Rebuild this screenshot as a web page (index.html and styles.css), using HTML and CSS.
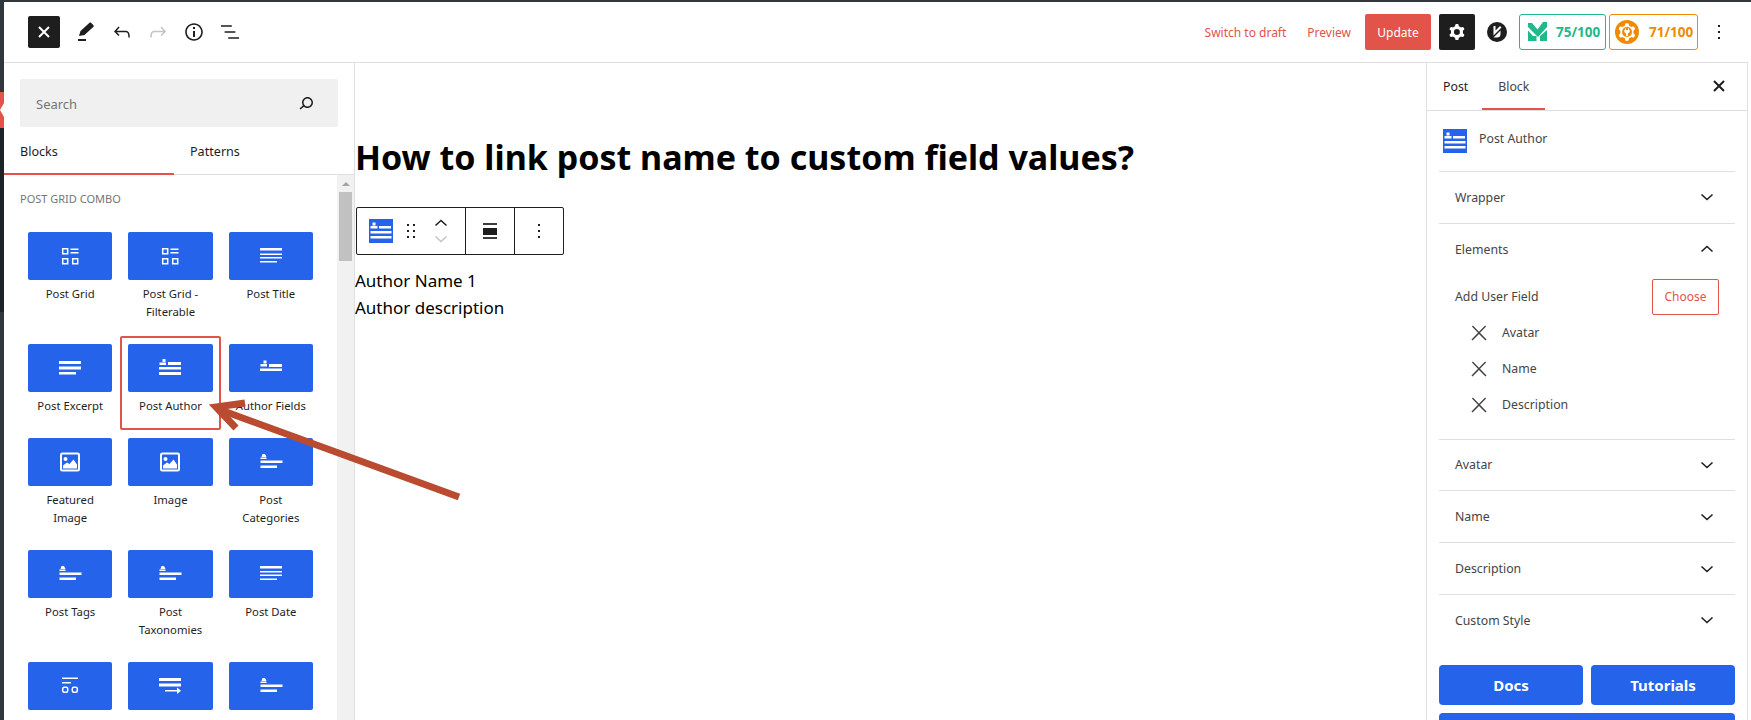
FILE: index.html
```html
<!DOCTYPE html>
<html>
<head>
  <title>Edit Post</title>
  <link rel="stylesheet" href="styles.css">
</head>
<body>
  <svg class="icon-defs">
    <symbol id="i-grid" viewBox="0 0 24 24">
      <path fill="none" stroke="currentColor" stroke-width="1.5" d="M4.7 4.7h5v5h-5zM4.7 14.7h5v5h-5zM14.700 14.700h5v5h-5z"/>
      <path fill="currentColor" d="M12.500 4.500h8V6h-8zM12.500 8h8v1.500h-8z"/>
    </symbol>
    <symbol id="i-title" viewBox="0 0 24 24">
      <path fill="currentColor" d="M1 4h22v2.500H1zM1 9.500h22V11H1zM1 13h22v1.500H1zM1 17h17v1.500H1z"/>
    </symbol>
    <symbol id="i-excerpt" viewBox="0 0 24 24">
      <path fill="currentColor" d="M1 5h22v3H1zM1 10.500h22v3H1zM1 16h17v2.500H1z"/>
    </symbol>
    <symbol id="i-author" viewBox="0 0 24 24">
      <path fill="currentColor" d="M4.500 3h3v3h-3zM1.500 6.500h6.500v2.500H1.500zM10 6h13v3H10zM1 11h22v2.500H1zM1 16h22v3H1z"/>
    </symbol>
    <symbol id="i-fields" viewBox="0 0 24 24">
      <path fill="currentColor" d="M4.500 4.500h3v3h-3zM1.500 8h6.500v2.500H1.500zM10 8h13v3H10zM1 12.500h22v2.500H1z"/>
    </symbol>
    <symbol id="i-image" viewBox="0 0 24 24">
      <rect x="3" y="3.500" width="18" height="17" rx="1.500" fill="none" stroke="currentColor" stroke-width="2"/>
      <circle cx="7.500" cy="9" r="2" fill="currentColor"/>
      <path fill="currentColor" d="M5 18.500v-3l4-3 2.500 1.500 4-4.500 3.500 5v4z"/>
    </symbol>
    <symbol id="i-tags" viewBox="0 0 24 24">
      <path fill="currentColor" d="M3.500 4h2.500l1.500 3H2.500zM1.500 7.500h6V9h-6zM1.500 10.500h22V13h-22zM1.500 15.500h16.500V18H1.500z"/>
    </symbol>
    <symbol id="i-date" viewBox="0 0 24 24">
      <path fill="currentColor" d="M1 4h22v2.500H1zM1 9h22v1.500H1zM1 12.500h22V14H1zM1 16.500h17V18H1z"/>
    </symbol>
    <symbol id="i-meta" viewBox="0 0 24 24">
      <path fill="currentColor" d="M4 3.500h16V5H4zM4 8h9v1.500H4z"/>
      <rect x="4.700" y="13.200" width="5" height="5" rx="1.500" fill="none" stroke="currentColor" stroke-width="1.500"/>
      <rect x="14.300" y="13.200" width="5" height="5" rx="1.500" fill="none" stroke="currentColor" stroke-width="1.500"/>
    </symbol>
    <symbol id="i-more" viewBox="0 0 24 24">
      <path fill="currentColor" d="M1 4h22v3H1zM1 9.500h22v3H1zM7 16h12v-2.500l4 3.200-4 3.300v-2.500H7z"/>
    </symbol>
    <symbol id="i-author-blue" viewBox="0 0 24 24">
      <rect width="24" height="24" fill="#2563eb"/>
      <path fill="#fff" d="M3.500 3.500h3v3h-3zM1.500 7h7v2.500h-7zM10 7h12v2.500H10zM1.500 12h21v2.500h-21zM1.500 17h21v2.500h-21z"/>
    </symbol>
    <symbol id="i-chev-down" viewBox="0 0 24 24">
      <path fill="none" stroke="currentColor" stroke-width="1.600" d="M6.500 9.500l5.500 5 5.500-5"/>
    </symbol>
    <symbol id="i-chev-up" viewBox="0 0 24 24">
      <path fill="none" stroke="currentColor" stroke-width="1.600" d="M6.500 14.500l5.500-5 5.500 5"/>
    </symbol>
    <symbol id="i-close" viewBox="0 0 24 24">
      <path fill="currentColor" d="M13 11.800l6.100-6.300-1-1-6.100 6.200-6.100-6.200-1 1 6.100 6.300-6.500 6.700 1 1 6.500-6.600 6.500 6.600 1-1z"/>
    </symbol>
    <symbol id="i-close-bold" viewBox="0 0 24 24">
      <path fill="none" stroke="currentColor" stroke-width="2" d="M7 7l10 10M17 7L7 17"/>
    </symbol>
    <symbol id="i-dots" viewBox="0 0 24 24">
      <path fill="currentColor" d="M13 19h-2v-2h2v2zm0-6h-2v-2h2v2zm0-6h-2V5h2v2z"/>
    </symbol>
  </svg>

  <div class="shell">
    <div class="admin-strip">
      <div class="strip-top"></div>
      <div class="strip-active"></div>
      <div class="strip-mid"></div>
      <div class="strip-bottom"></div>
    </div>

    <div class="editor">
      <header class="topbar">
        <button class="close-btn"><svg width="24" height="24"><use href="#i-close-bold"/></svg></button>
        <svg class="tool" width="24" height="24" viewBox="0 0 24 24"><path fill="#1e1e1e" d="M4 19h8v2H4zM5 16l1.500-5 9-8.200c.5-.4 1.100-.4 1.500 0l2.500 2.500c.4.400.4 1 0 1.500L10.500 15z"/></svg>
        <svg class="tool" width="24" height="24" viewBox="0 0 24 24"><path fill="#1e1e1e" d="M18.300 11.700c-.6-.6-1.400-.9-2.300-.9H6.700l2.900-3.300-1.100-1-4.500 5L8.500 16l1-1-2.700-2.700H16c.5 0 .9.200 1.300.5 1 1 1 3.400 1 4.500v.3h1.500v-.2c0-1.500 0-4.300-1.500-5.700z"/></svg>
        <svg class="tool" width="24" height="24" viewBox="0 0 24 24"><path fill="#c4c4c4" d="M15.600 6.500l-1.100 1 2.900 3.300H8c-.9 0-1.700.3-2.300.9-1.400 1.500-1.400 4.200-1.400 5.600v.2h1.500v-.3c0-1.100 0-3.500 1-4.500.3-.3.7-.5 1.300-.5h9.200L14.500 15l1.100 1.100 4.600-4.600-4.600-5z"/></svg>
        <svg class="tool" width="24" height="24" viewBox="0 0 24 24"><path fill="#1e1e1e" d="M12 3.200c-4.800 0-8.800 3.900-8.800 8.800 0 4.800 3.900 8.800 8.800 8.800 4.800 0 8.800-3.900 8.800-8.800 0-4.800-4-8.800-8.800-8.800zm0 16c-4 0-7.200-3.300-7.200-7.200C4.800 8 8 4.800 12 4.800s7.200 3.300 7.200 7.200c0 4-3.200 7.200-7.200 7.200zM11 17h2v-6h-2v6zm0-8h2V7h-2v2z"/></svg>
        <svg class="tool" width="24" height="24" viewBox="0 0 24 24"><path fill="#1e1e1e" d="M13.800 5.200H3v1.500h10.800V5.200zm-3.600 12v1.500H21v-1.500H10.200zm7.200-6H6.600v1.500h10.800v-1.500z"/></svg>

        <div class="topbar-right">
          <a class="link-btn draft-link">Switch to draft</a>
          <a class="link-btn preview-link">Preview</a>
          <button class="update-btn">Update</button>
          <button class="settings-btn">
            <svg width="24" height="24" viewBox="0 0 24 24"><path fill="#fff" fill-rule="evenodd" d="M10.289 4.836A1 1 0 0111.275 4h1.306a1 1 0 01.987.836l.244 1.466c.787.26 1.503.679 2.108 1.218l1.393-.522a1 1 0 011.216.437l.653 1.13a1 1 0 01-.23 1.273l-1.148.944a6.025 6.025 0 010 2.435l1.149.946a1 1 0 01.23 1.272l-.653 1.13a1 1 0 01-1.216.437l-1.394-.522c-.605.54-1.32.958-2.108 1.218l-.244 1.466a1 1 0 01-.987.836h-1.306a1 1 0 01-.986-.836l-.244-1.466a5.995 5.995 0 01-2.108-1.218l-1.394.522a1 1 0 01-1.217-.436l-.653-1.131a1 1 0 01.23-1.272l1.149-.946a6.026 6.026 0 010-2.435l-1.148-.944a1 1 0 01-.23-1.272l.653-1.131a1 1 0 011.217-.437l1.393.522a5.994 5.994 0 012.108-1.218l.244-1.466zM14.929 12a3 3 0 11-6 0 3 3 0 016 0z"/></svg>
          </button>
          <svg class="brand-logo" width="20" height="20" viewBox="0 0 20 20">
            <circle cx="10" cy="10" r="10" fill="#1e1e1e"/>
            <path fill="#fff" d="M6.500 4h2v4.500l4.500-4.500 1.500 1.500-8 8z"/>
            <path fill="#fff" d="M6.500 15.500l7-7v3.500a3.500 3.500 0 0 1-3.500 3.500z"/>
          </svg>
          <div class="score score-green">
            <svg width="19" height="19" viewBox="0 0 19 19"><path fill="#1fb98c" d="M0 1h4l5.500 6.500L15 0h4v5l-9 10L0 5zM0 8.500l5 5.500h3.500v5H0zM19 8v11h-7v-5z"/></svg>
            <span>75/100</span>
          </div>
          <div class="score score-orange">
            <svg width="24" height="24" viewBox="0 0 24 24">
              <circle cx="12" cy="12" r="12" fill="#f08a00"/>
              <path transform="translate(-1.200 -1.200) scale(1.100)" fill="#fff" d="M10.289 4.836A1 1 0 0111.275 4h1.306a1 1 0 01.987.836l.244 1.466c.787.26 1.503.679 2.108 1.218l1.393-.522a1 1 0 011.216.437l.653 1.13a1 1 0 01-.23 1.273l-1.148.944a6.025 6.025 0 010 2.435l1.149.946a1 1 0 01.23 1.272l-.653 1.13a1 1 0 01-1.216.437l-1.394-.522c-.605.54-1.32.958-2.108 1.218l-.244 1.466a1 1 0 01-.987.836h-1.306a1 1 0 01-.986-.836l-.244-1.466a5.995 5.995 0 01-2.108-1.218l-1.394.522a1 1 0 01-1.217-.436l-.653-1.131a1 1 0 01.23-1.272l1.149-.946a6.026 6.026 0 010-2.435l-1.148-.944a1 1 0 01-.23-1.272l.653-1.131a1 1 0 011.217-.437l1.393.522a5.994 5.994 0 012.108-1.218l.244-1.466z"/>
              <circle cx="12" cy="12" r="5" fill="#f08a00"/>
              <path fill="#fff" d="M10 8.500h1v1.500h2V8.500h1V10h.7v2l-1.700 1.500V16h-2v-2.500L9.300 12v-2h.7z"/>
            </svg>
            <span>71/100</span>
          </div>
          <svg class="more-top" width="24" height="24"><use href="#i-dots"/></svg>
        </div>
      </header>

      <div class="workspace">
        <aside class="inserter">
          <div class="search-box">
            <span>Search</span>
            <svg width="24" height="24" viewBox="0 0 24 24"><path fill="#1e1e1e" d="M13.500 6C10.500 6 8 8.500 8 11.500c0 1.100.3 2.100.9 3l-3.400 3 1 1.100 3.400-2.900c1 .9 2.200 1.400 3.600 1.400 3 0 5.500-2.500 5.500-5.500C19 8.500 16.500 6 13.500 6zm0 9.500c-2.200 0-4-1.800-4-4s1.800-4 4-4 4 1.800 4 4-1.800 4-4 4z"/></svg>
          </div>
          <div class="inserter-tabs">
            <div class="inserter-tab active">Blocks</div>
            <div class="inserter-tab">Patterns</div>
          </div>
          <div class="inserter-body">
            <div class="block-list">
              <h2 class="block-heading">POST GRID COMBO</h2>
              <div class="block-grid">
                <div class="block-item"><div class="tile"><svg><use href="#i-grid"/></svg></div><p>Post Grid</p></div>
                <div class="block-item"><div class="tile"><svg><use href="#i-grid"/></svg></div><p>Post Grid - Filterable</p></div>
                <div class="block-item"><div class="tile"><svg><use href="#i-title"/></svg></div><p>Post Title</p></div>
                <div class="block-item"><div class="tile"><svg><use href="#i-excerpt"/></svg></div><p>Post Excerpt</p></div>
                <div class="block-item marked"><div class="tile"><svg><use href="#i-author"/></svg></div><p>Post Author</p></div>
                <div class="block-item"><div class="tile"><svg><use href="#i-fields"/></svg></div><p>Author Fields</p></div>
                <div class="block-item"><div class="tile"><svg><use href="#i-image"/></svg></div><p>Featured Image</p></div>
                <div class="block-item"><div class="tile"><svg><use href="#i-image"/></svg></div><p>Image</p></div>
                <div class="block-item"><div class="tile"><svg><use href="#i-tags"/></svg></div><p>Post Categories</p></div>
                <div class="block-item"><div class="tile"><svg><use href="#i-tags"/></svg></div><p>Post Tags</p></div>
                <div class="block-item"><div class="tile"><svg><use href="#i-tags"/></svg></div><p>Post Taxonomies</p></div>
                <div class="block-item"><div class="tile"><svg><use href="#i-date"/></svg></div><p>Post Date</p></div>
                <div class="block-item"><div class="tile"><svg><use href="#i-meta"/></svg></div><p>Post Meta</p></div>
                <div class="block-item"><div class="tile"><svg><use href="#i-more"/></svg></div><p>Read More</p></div>
                <div class="block-item"><div class="tile"><svg><use href="#i-tags"/></svg></div><p>Terms List</p></div>
              </div>
            </div>
            <div class="scrollbar">
              <div class="scroll-arrow"></div>
              <div class="scroll-thumb"></div>
            </div>
          </div>
        </aside>

        <main class="canvas">
          <h1>How to link post name to custom field values?</h1>
          <div class="block-toolbar">
            <div class="toolbar-group group-main">
              <svg width="24" height="24"><use href="#i-author-blue"/></svg>
              <svg class="drag" width="24" height="24" viewBox="0 0 24 24"><path fill="#1e1e1e" d="M8 7h2V5H8v2zm0 6h2v-2H8v2zm0 6h2v-2H8v2zm6-14v2h2V5h-2zm0 8h2v-2h-2v2zm0 6h2v-2h-2v2z"/></svg>
              <div class="movers">
                <svg width="24" height="16" viewBox="0 0 24 16"><path fill="none" stroke="#1e1e1e" stroke-width="1.500" d="M6.500 10.500l5.500-5 5.500 5"/></svg>
                <svg width="24" height="16" viewBox="0 0 24 16"><path fill="none" stroke="#c4c4c4" stroke-width="1.500" d="M6.500 5.500l5.500 5 5.500-5"/></svg>
              </div>
            </div>
            <div class="toolbar-group group-align">
              <svg width="24" height="24" viewBox="0 0 24 24"><path fill="#3c3c3c" d="M5 4h14v2H5zM5 18h14v2H5z"/><path fill="#1e1e1e" d="M5 9h14v7H5z"/></svg>
            </div>
            <div class="toolbar-group group-more">
              <svg width="24" height="24"><use href="#i-dots"/></svg>
            </div>
          </div>
          <p class="author-line">Author Name 1</p>
          <p class="author-line">Author description</p>
        </main>

        <aside class="sidebar">
          <div class="sidebar-tabs">
            <div class="sidebar-tab tab-post">Post</div>
            <div class="sidebar-tab active">Block</div>
            <svg class="sidebar-close" width="24" height="24"><use href="#i-close-bold"/></svg>
          </div>
          <div class="sidebar-body">
            <div class="block-card">
              <svg width="24" height="24"><use href="#i-author-blue"/></svg>
              <span>Post Author</span>
            </div>
            <div class="panel">
              <div class="panel-head"><span>Wrapper</span><svg width="24" height="24"><use href="#i-chev-down"/></svg></div>
            </div>
            <div class="panel">
              <div class="panel-head"><span>Elements</span><svg width="24" height="24"><use href="#i-chev-up"/></svg></div>
              <div class="panel-content">
                <div class="field-row">
                  <span>Add User Field</span>
                  <button class="choose-btn">Choose</button>
                </div>
                <div class="field-item"><svg width="24" height="24"><use href="#i-close"/></svg><span>Avatar</span></div>
                <div class="field-item"><svg width="24" height="24"><use href="#i-close"/></svg><span>Name</span></div>
                <div class="field-item"><svg width="24" height="24"><use href="#i-close"/></svg><span>Description</span></div>
              </div>
            </div>
            <div class="panel">
              <div class="panel-head"><span>Avatar</span><svg width="24" height="24"><use href="#i-chev-down"/></svg></div>
            </div>
            <div class="panel">
              <div class="panel-head"><span>Name</span><svg width="24" height="24"><use href="#i-chev-down"/></svg></div>
            </div>
            <div class="panel">
              <div class="panel-head"><span>Description</span><svg width="24" height="24"><use href="#i-chev-down"/></svg></div>
            </div>
            <div class="panel panel-last">
              <div class="panel-head"><span>Custom Style</span><svg width="24" height="24"><use href="#i-chev-down"/></svg></div>
            </div>
            <div class="help-buttons">
              <button class="help-btn">Docs</button>
              <button class="help-btn">Tutorials</button>
              <button class="help-btn help-wide">Support</button>
            </div>
          </div>
        </aside>
      </div>
    </div>

    <svg class="annotation-arrow" width="1751" height="720" viewBox="0 0 1751 720">
      <path fill="none" stroke="#b94b30" stroke-width="7" d="M459 497L218 409"/>
      <path fill="none" stroke="#b94b30" stroke-width="7" d="M245 403L216 407L236 428"/>
    </svg>
  </div>
</body>
</html>
```

FILE: styles.css
```css
* {
  box-sizing: border-box;
}

body {
  margin: 0;
  background-color: #fff;
  color: #1e1e1e;
  font-family: "Noto Sans", sans-serif;
  font-size: 13px;
}

.icon-defs {
  position: absolute;
  width: 0;
  height: 0;
}

button {
  font-family: inherit;
  border: none;
  padding: 0;
}

svg {
  display: block;
}

.shell {
  position: relative;
  display: flex;
  height: 720px;
  overflow: hidden;
  border-top: 2px solid #32373c;
}

/* admin menu peeking out on the left */
.admin-strip {
  display: flex;
  flex-direction: column;
  flex: 0 0 4px;
}

.strip-top {
  height: 90px;
  background-color: #32373c;
}

.strip-active {
  position: relative;
  height: 36px;
  background-color: #e2534a;
}

.strip-active::after {
  content: "";
  position: absolute;
  right: 0;
  top: 11px;
  border-right: 4px solid #fff;
  border-top: 7px solid transparent;
  border-bottom: 7px solid transparent;
}

.strip-mid {
  height: 184px;
  background-color: #1d2327;
}

.strip-bottom {
  flex: 1;
  background-color: #32373c;
}

.editor {
  display: flex;
  flex-direction: column;
  flex: 1;
  min-width: 0;
  padding-right: 3px;
}

/* top bar */
.topbar {
  display: flex;
  align-items: center;
  flex: 0 0 61px;
  padding: 0 17px 1px 24px;
  border-bottom: 1px solid #e0e0e0;
}

.close-btn {
  width: 32px;
  height: 32px;
  margin-right: 14px;
  display: flex;
  align-items: center;
  justify-content: center;
  color: #fff;
  background-color: #1e1e1e;
  border-radius: 2px;
}

.tool {
  margin-right: 12px;
}

.topbar-right {
  display: flex;
  align-items: center;
  margin-left: auto;
}

.link-btn {
  padding-top: 2px;
  color: #e2534a;
  font-size: 12px;
}

.draft-link {
  margin-right: 21px;
}

.preview-link {
  margin-right: 14px;
}

.update-btn {
  width: 66px;
  height: 36px;
  margin-right: 8px;
  padding-top: 2px;
  color: #fff;
  font-size: 12px;
  background-color: #e2534a;
  border-radius: 2px;
}

.settings-btn {
  width: 36px;
  height: 36px;
  margin-right: 12px;
  display: flex;
  align-items: center;
  justify-content: center;
  background-color: #1e1e1e;
  border-radius: 2px;
}

.brand-logo {
  margin-right: 12px;
}

.score {
  display: flex;
  align-items: center;
  height: 36px;
  font-size: 13.5px;
  font-weight: 700;
  border: 1px solid;
  border-radius: 3px;
}

.score-green {
  width: 87px;
  margin-right: 3px;
  padding-left: 8px;
  gap: 9px;
  color: #1fb98c;
}

.score-orange {
  width: 89px;
  margin-right: 9px;
  padding-left: 5px;
  gap: 10px;
  color: #f08a00;
}

/* three columns under the bar */
.workspace {
  display: flex;
  flex: 1;
  min-height: 0;
}

/* block inserter */
.inserter {
  display: flex;
  flex-direction: column;
  flex: 0 0 351px;
  border-right: 1px solid #e0e0e0;
}

.search-box {
  display: flex;
  align-items: center;
  justify-content: space-between;
  flex: 0 0 48px;
  margin: 16px 16px 0;
  padding: 0 20px 0 16px;
  color: #757575;
  font-size: 13px;
  background-color: #f0f0f0;
  border-radius: 2px;
}

.search-box span {
  padding-top: 2px;
}

.inserter-tabs {
  display: flex;
  flex: 0 0 48px;
  border-bottom: 1px solid #e0e0e0;
}

.inserter-tab {
  width: 170px;
  padding: 16px 16px 0;
  margin-bottom: -1px;
  font-size: 12.6px;
}

.inserter-tab.active {
  border-bottom: 2px solid #e2534a;
}

.inserter-body {
  display: flex;
  flex: 1;
  min-height: 0;
}

.block-list {
  flex: 1;
  padding: 16px 16px 0;
}

.block-heading {
  margin: 0 0 17px;
  color: #757575;
  font-size: 11px;
  font-weight: 400;
  line-height: 16px;
}

.block-grid {
  display: grid;
  grid-template-columns: repeat(3, 1fr);
}

.block-item {
  padding: 8px 8px 15px;
  text-align: center;
}

.block-item p {
  margin: 5px 0 0;
  padding: 0 4px;
  font-size: 11.3px;
  line-height: 18px;
  color: #1e1e1e;
}

.block-item.marked {
  outline: 2px solid #e2534a;
  outline-offset: -2px;
  border-radius: 2px;
}

.tile {
  display: flex;
  align-items: center;
  justify-content: center;
  height: 48px;
  color: #fff;
  background-color: #2563eb;
  border-radius: 2px;
}

.tile svg {
  width: 24px;
  height: 24px;
}

.scrollbar {
  flex: 0 0 17px;
  padding: 0 2px;
  background-color: #f1f1f1;
}

.scroll-arrow {
  width: 8px;
  height: 4px;
  margin: 7px auto 6px;
  border-left: 4px solid transparent;
  border-right: 4px solid transparent;
  border-bottom: 4px solid #a3a3a3;
}

.scroll-thumb {
  height: 69px;
  background-color: #c1c1c1;
}

/* post canvas */
.canvas {
  flex: 1;
  min-width: 0;
  padding-top: 70px;
}

.canvas h1 {
  margin: 0 0 26px;
  color: #000;
  font-size: 34px;
  font-weight: 700;
  line-height: 48px;
  white-space: nowrap;
}

.block-toolbar {
  display: flex;
  width: 208px;
  height: 48px;
  margin: 0 0 12px 1px;
  background-color: #fff;
  border: 1px solid #1e1e1e;
  border-radius: 2px;
}

.toolbar-group {
  display: flex;
  align-items: center;
  justify-content: center;
  border-right: 1px solid #1e1e1e;
}

.group-main {
  width: 109px;
  justify-content: flex-start;
  padding-left: 12px;
}

.group-main .drag {
  margin-left: 6px;
}

.movers {
  margin-left: 6px;
}

.group-align {
  width: 49px;
}

.group-more {
  flex: 1;
  border-right: none;
}

.author-line {
  margin: 0;
  color: #000;
  font-size: 17px;
  line-height: 27px;
}

/* settings sidebar */
.sidebar {
  display: flex;
  flex-direction: column;
  flex: 0 0 322px;
  color: #444;
  border-left: 1px solid #e0e0e0;
  border-right: 1px solid #e0e0e0;
}

.sidebar-tabs {
  display: flex;
  align-items: flex-start;
  flex: 0 0 47px;
  border-bottom: 1px solid #e0e0e0;
}

.sidebar-tab {
  height: 47px;
  padding: 15px 16px 0;
  font-size: 12.3px;
  color: #1e1e1e;
}

.tab-post {
  padding-right: 14px;
}

.sidebar-tab.active {
  color: #444;
  border-bottom: 2px solid #e2534a;
}

.sidebar-close {
  margin: 11px 16px 0 auto;
  color: #1e1e1e;
}

.sidebar-body {
  padding: 0 12px;
}

.block-card {
  display: flex;
  align-items: center;
  gap: 12px;
  height: 60px;
  padding: 0 4px;
  font-size: 12.3px;
}

.block-card span {
  margin-bottom: 6px;
}

.panel {
  border-top: 1px solid #e0e0e0;
}

.panel-last {
  margin-bottom: 19.3px;
}

.panel-head {
  display: flex;
  align-items: center;
  justify-content: space-between;
  height: 50.8px;
  padding: 0 16px;
  font-size: 12.3px;
  color: #444;
}

.panel-head svg {
  color: #1e1e1e;
}

.panel-content {
  padding: 4px 16px 16px;
}

.field-row {
  display: flex;
  align-items: center;
  justify-content: space-between;
  height: 36px;
  font-size: 12.3px;
}

.choose-btn {
  width: 67px;
  height: 36px;
  color: #e2534a;
  font-size: 12px;
  background-color: #fff;
  border: 1px solid #e2534a;
  border-radius: 2px;
}

.field-item {
  display: flex;
  align-items: center;
  gap: 11px;
  height: 36px;
  padding-left: 12px;
  font-size: 12.3px;
}

.help-buttons {
  display: grid;
  grid-template-columns: 1fr 1fr;
  gap: 8px;
}

.help-btn {
  height: 40px;
  color: #fff;
  font-size: 15px;
  font-weight: 700;
  background-color: #2563eb;
  border-radius: 4px;
}

.help-wide {
  grid-column: 1 / 3;
}

/* red arrow drawn over the screenshot */
.annotation-arrow {
  position: absolute;
  left: 0;
  top: -2px;
  pointer-events: none;
}
```
